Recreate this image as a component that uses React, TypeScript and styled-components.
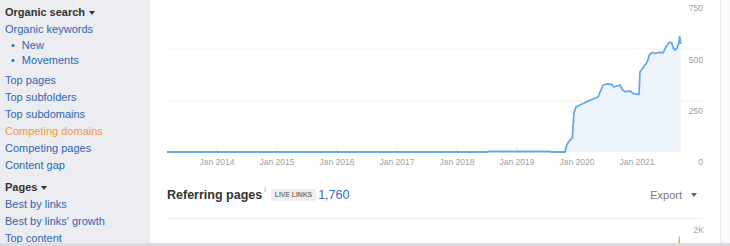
import React from "react";
import styled, { createGlobalStyle } from "styled-components";

const GlobalStyle = createGlobalStyle`
  html, body {
    margin: 0;
    padding: 0;
    overflow: hidden;
  }
  body {
    font-family: "Liberation Sans", Arial, sans-serif;
    background: #ffffff;
  }
`;

const Page = styled.div`
  width: 730px;
  height: 246px;
  display: flex;
  flex-direction: column;
  overflow: hidden;
`;

const Content = styled.div`
  flex: 1;
  display: flex;
  min-height: 0;
  overflow: hidden;
`;

const BottomBar = styled.div`
  height: 3px;
  background: #d9dbde;
`;

const Sidebar = styled.nav`
  width: 150px;
  flex-shrink: 0;
  background: #ebedf0;
  padding: 3.5px 0 0 5px;
  box-sizing: border-box;
  font-size: 11px;
`;

const Heading = styled.div<{ $gap?: number }>`
  line-height: 17px;
  font-weight: bold;
  color: #333333;
  margin-top: ${(p) => p.$gap ?? 0}px;
  display: flex;
  align-items: center;
  gap: 4px;

  &::after {
    content: "";
    display: block;
    border-left: 3px solid transparent;
    border-right: 3px solid transparent;
    border-top: 4px solid #333333;
    margin-top: 1px;
  }
`;

const NavLink = styled.div<{ $active?: boolean; $gap?: number }>`
  line-height: 17px;
  color: ${(p) => (p.$active ? "#f5953d" : "#2f65b4")};
  margin-top: ${(p) => p.$gap ?? 0}px;
  white-space: nowrap;
`;

const SubLink = styled.div`
  line-height: 15px;
  color: #2f65b4;
  padding-left: 6px;
  display: flex;
  gap: 7px;
`;

const Main = styled.main`
  flex: 1;
  display: flex;
  flex-direction: column;
  background: #ffffff;
`;

const RightGutter = styled.div`
  width: 9px;
  flex-shrink: 0;
  border-left: 1px solid #ececec;
  background: #fafafa;
`;

const SectionHeader = styled.div`
  margin-top: 13px;
  height: 20px;
  padding: 0 23px 0 17px;
  display: flex;
  align-items: center;
`;

const SectionTitle = styled.span`
  font-size: 12.5px;
  font-weight: bold;
  color: #333333;
`;

const InfoMark = styled.sup`
  font-size: 7px;
  color: #999999;
  margin: 0 5px 0 2px;
  align-self: flex-start;
  line-height: 10px;
`;

const Badge = styled.span`
  background: #efefef;
  color: #7a7a7a;
  font-size: 6.8px;
  font-weight: bold;
  padding: 0 4px;
  height: 12px;
  line-height: 12px;
  border-radius: 2px;
  margin-right: 2px;
`;

const Count = styled.span`
  font-size: 12.5px;
  color: #3170c4;
`;

const Export = styled.span`
  margin-left: auto;
  font-size: 11px;
  color: #777777;
  display: flex;
  align-items: center;
  gap: 9px;

  &::after {
    content: "";
    display: block;
    border-left: 3px solid transparent;
    border-right: 3px solid transparent;
    border-top: 4px solid #666666;
  }
`;

const Divider = styled.div`
  margin: 13px 17px 0 17px;
  border-top: 1px solid #ededed;
`;

const years = [2014, 2015, 2016, 2017, 2018, 2019, 2020, 2021];

const points: [number, number][] = [
  [167, 152],
  [487, 152],
  [488, 151.5],
  [550, 151.5],
  [551, 152],
  [565, 152],
  [566.7, 145],
  [570, 140],
  [572.3, 138],
  [574, 113],
  [576, 107],
  [580, 105],
  [586.7, 101.7],
  [593, 99],
  [598, 97],
  [601, 90],
  [603, 85],
  [606.7, 84],
  [611.7, 84.3],
  [614, 87],
  [620, 85],
  [622.7, 90],
  [625, 91.7],
  [630, 91],
  [634, 94],
  [639, 94.3],
  [640, 71.7],
  [642.7, 68.3],
  [645, 65],
  [647.3, 61.7],
  [649.3, 55],
  [651.7, 52.7],
  [655, 53.3],
  [660, 52.3],
  [663.3, 52.7],
  [666, 46.7],
  [669.3, 42.3],
  [671.7, 42.7],
  [673.3, 48.3],
  [675, 50],
  [677.3, 47.7],
  [678.7, 43.3],
  [679.7, 36.7],
  [680.7, 44],
];

function TrafficChart() {
  const line = points.map(([x, y], i) => `${i ? "L" : "M"}${x} ${y}`).join(" ");
  const area = `${line} L680.7 152 L167 152 Z`;
  const label = { fontSize: 8.5, fill: "#a0a0a0", fontFamily: "Liberation Sans, Arial, sans-serif" };
  return (
    <svg width={570} height={172} viewBox="150 0 570 172" style={{ display: "block" }}>
      <line x1={166} x2={703} y1={49} y2={49} stroke="#efefef" />
      <line x1={166} x2={703} y1={101} y2={101} stroke="#efefef" />
      {years.map((y, i) => (
        <line key={y} x1={217 + i * 60} x2={217 + i * 60} y1={147} y2={152} stroke="#e2e2e2" />
      ))}
      <path d={area} fill="#eef4fc" />
      <path d={line} fill="none" stroke="#68a7e5" strokeWidth={1.8} strokeLinejoin="round" />
      {years.map((y, i) => (
        <text key={y} x={217 + i * 60} y={165} textAnchor="middle" {...label}>
          Jan {y}
        </text>
      ))}
      <text x={703} y={11} textAnchor="end" {...label}>750</text>
      <text x={703} y={63} textAnchor="end" {...label}>500</text>
      <text x={703} y={114} textAnchor="end" {...label}>250</text>
      <text x={703} y={165} textAnchor="end" {...label}>0</text>
    </svg>
  );
}

function PagesChart() {
  return (
    <svg width={570} height={24} viewBox="150 220 570 24" style={{ display: "block" }}>
      <text x={704} y={234} textAnchor="end" fontSize={8.5} fill="#a0a0a0" fontFamily="Liberation Sans, Arial, sans-serif">
        2K
      </text>
      <path d="M678.4 244 L678.8 238 L679.6 236.5 L680 244 Z" fill="#f7941d" />
    </svg>
  );
}

export default function App() {
  return (
    <Page>
      <GlobalStyle />
      <Content>
        <Sidebar>
          <Heading>Organic search</Heading>
          <NavLink>Organic keywords</NavLink>
          <SubLink><span>•</span>New</SubLink>
          <SubLink><span>•</span>Movements</SubLink>
          <NavLink $gap={4}>Top pages</NavLink>
          <NavLink>Top subfolders</NavLink>
          <NavLink>Top subdomains</NavLink>
          <NavLink $active>Competing domains</NavLink>
          <NavLink>Competing pages</NavLink>
          <NavLink>Content gap</NavLink>
          <Heading $gap={5}>Pages</Heading>
          <NavLink>Best by links</NavLink>
          <NavLink>Best by links' growth</NavLink>
          <NavLink>Top content</NavLink>
        </Sidebar>
        <Main>
          <TrafficChart />
          <SectionHeader>
            <SectionTitle>Referring pages</SectionTitle>
            <InfoMark>i</InfoMark>
            <Badge>LIVE LINKS</Badge>
            <Count>1,760</Count>
            <Export>Export</Export>
          </SectionHeader>
          <Divider />
          <PagesChart />
        </Main>
        <RightGutter />
      </Content>
      <BottomBar />
    </Page>
  );
}
